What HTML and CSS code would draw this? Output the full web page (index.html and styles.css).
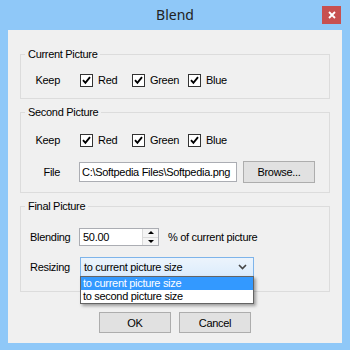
FILE: index.html
```html
<!DOCTYPE html>
<html>
<head>
<meta charset="utf-8">
<link rel="stylesheet" href="styles.css">
</head>
<body>
<div class="window">
  <div class="titlebar">
    <span></span>
    <span class="title">Blend</span>
    <span class="close"><svg width="8" height="8" viewBox="0 0 8 8"><path d="M1 1 L7 7 M7 1 L1 7" stroke="#fff" stroke-width="1.8" fill="none"/></svg></span>
  </div>
  <div class="client">
    <fieldset class="group g1">
      <legend>Current Picture</legend>
      <div class="row">
        <span class="lbl">Keep</span>
        <div class="checks">
          <label class="check"><span class="box"><svg width="11" height="11" viewBox="0 0 11 11"><path d="M2 5.2 L4.4 7.8 L9 2.2" stroke="#000" stroke-width="1.9" fill="none"/></svg></span>Red</label>
          <label class="check"><span class="box"><svg width="11" height="11" viewBox="0 0 11 11"><path d="M2 5.2 L4.4 7.8 L9 2.2" stroke="#000" stroke-width="1.9" fill="none"/></svg></span>Green</label>
          <label class="check"><span class="box"><svg width="11" height="11" viewBox="0 0 11 11"><path d="M2 5.2 L4.4 7.8 L9 2.2" stroke="#000" stroke-width="1.9" fill="none"/></svg></span>Blue</label>
        </div>
      </div>
    </fieldset>
    <fieldset class="group g2">
      <legend>Second Picture</legend>
      <div class="row">
        <span class="lbl">Keep</span>
        <div class="checks">
          <label class="check"><span class="box"><svg width="11" height="11" viewBox="0 0 11 11"><path d="M2 5.2 L4.4 7.8 L9 2.2" stroke="#000" stroke-width="1.9" fill="none"/></svg></span>Red</label>
          <label class="check"><span class="box"><svg width="11" height="11" viewBox="0 0 11 11"><path d="M2 5.2 L4.4 7.8 L9 2.2" stroke="#000" stroke-width="1.9" fill="none"/></svg></span>Green</label>
          <label class="check"><span class="box"><svg width="11" height="11" viewBox="0 0 11 11"><path d="M2 5.2 L4.4 7.8 L9 2.2" stroke="#000" stroke-width="1.9" fill="none"/></svg></span>Blue</label>
        </div>
      </div>
      <div class="row row-file">
        <span class="lbl">File</span>
        <span class="textbox">C:\Softpedia Files\Softpedia.png</span>
        <span class="btn browse">Browse...</span>
      </div>
    </fieldset>
    <fieldset class="group g3">
      <legend>Final Picture</legend>
      <div class="row">
        <span class="lbl">Blending</span>
        <span class="spinbox">
          <span class="spin-text">50.00</span>
          <span class="spin">
            <span class="spin-btn"><span class="tri-up"></span></span>
            <span class="spin-btn"><span class="tri-down"></span></span>
          </span>
        </span>
        <span class="pct">% of current picture</span>
      </div>
      <div class="row">
        <span class="lbl">Resizing</span>
        <span class="combo">
          <span class="combo-text">to current picture size</span>
          <svg class="chev" width="9" height="6" viewBox="0 0 9 6"><path d="M1 1 L4.5 4.5 L8 1" stroke="#444" stroke-width="1.6" fill="none"/></svg>
          <span class="droplist">
            <span class="item sel">to current picture size</span>
            <span class="item">to second picture size</span>
          </span>
        </span>
      </div>
    </fieldset>
    <div class="buttons">
      <span class="btn">OK</span>
      <span class="btn">Cancel</span>
    </div>
  </div>
</div>
</body>
</html>
```
FILE: styles.css
```css
html, body { margin: 0; padding: 0; }
body {
  width: 350px; height: 350px;
  font-family: "Liberation Sans", Arial, sans-serif;
  font-size: 11px;
  letter-spacing: -0.3px;
  color: #000;
}
.window {
  width: 350px; height: 350px;
  box-sizing: border-box;
  background: #8fc8f8;
  padding: 0 8px 7px;
  display: flex; flex-direction: column;
}
.titlebar {
  height: 30px;
  display: grid;
  grid-template-columns: 1fr auto 1fr;
  align-items: start;
}
.title {
  font-family: "Noto Sans", "Open Sans", sans-serif;
  font-size: 14px;
  letter-spacing: 0;
  line-height: 30px;
  color: #222;
}
.close {
  justify-self: end;
  margin-top: 6px;
  margin-right: 1px;
  width: 19px; height: 18px;
  background: #c75050;
  display: flex; align-items: center; justify-content: center;
}
.close svg { display: block; }
.client {
  flex: 1;
  background: #f0f0f0;
  padding: 18px 12px 0 12px;
}
.group {
  margin: 0;
  padding: 0;
  min-width: 0;
  border: 1px solid #dcdcdc;
}
.group legend {
  margin-left: 4px;
  padding: 0 3px;
  line-height: 13px;
}
.g1 { padding: 9px 0 8px 0; }
.g2 { margin-top: 7px; padding: 11px 0 9px 0; }
.g3 { margin-top: 7px; padding: 14px 0 14px 0; }
.row {
  display: flex;
  align-items: center;
  height: 20px;
}
.row-file { height: 22px; margin-top: 11px; }
.g3 .row + .row { margin-top: 10px; }
.lbl {
  width: 30px;
  margin-left: 9px;
  margin-right: 20px;
  text-align: right;
  white-space: nowrap;
}
.g3 .lbl { width: 49px; margin-right: 0; text-align: left; }
.row-file .lbl { margin-right: 19px; }
.checks {
  display: grid;
  grid-template-columns: 52px 56px auto;
}
.check {
  display: flex; align-items: center; gap: 5px;
}
.box {
  width: 13px; height: 13px;
  box-sizing: border-box;
  border: 1px solid #333;
  background: #fff;
  display: flex; align-items: center; justify-content: center;
}
.box svg { display: block; }
.textbox {
  width: 158px; height: 20px;
  box-sizing: border-box;
  border: 1px solid #abadb3;
  background: #fff;
  padding-left: 2px;
  display: flex; align-items: center;
  white-space: nowrap; overflow: hidden;
}
.btn {
  width: 72px; height: 21px;
  box-sizing: border-box;
  border: 1px solid #adadad;
  background: #e1e1e1;
  display: flex; align-items: center; justify-content: center;
}
.browse { margin-left: 6px; height: 22px; }
.spinbox {
  width: 80px; height: 18px;
  box-sizing: border-box;
  border: 1px solid #abadb3;
  background: #fff;
  display: flex;
}
.spin-text { flex: 1; padding-left: 3px; display: flex; align-items: center; }
.spin {
  width: 15px;
  display: flex; flex-direction: column;
  border-left: 1px solid #dadada;
}
.spin-btn {
  flex: 1;
  display: flex; align-items: center; justify-content: center;
  background: #f4f4f4;
}
.spin-btn + .spin-btn { border-top: 1px solid #dadada; }
.tri-up, .tri-down {
  width: 0; height: 0;
  border-left: 3px solid transparent;
  border-right: 3px solid transparent;
}
.tri-up { border-bottom: 3px solid #000; }
.tri-down { border-top: 3px solid #000; }
.pct { margin-left: 9px; }
.combo {
  position: relative;
  margin-left: 1px;
  width: 174px; height: 20px;
  box-sizing: border-box;
  border: 1px solid #7eb4ea;
  background: linear-gradient(#ecf4fc, #dcecfc);
  display: flex; align-items: center;
  padding: 0 6px 0 3px;
}
.combo-text { flex: 1; }
.chev { display: block; }
.droplist {
  position: absolute;
  left: -1px; top: 18px;
  width: 174px;
  box-sizing: border-box;
  border: 1px solid #646464;
  background: #fff;
  box-shadow: 2px 2px 3px rgba(0,0,0,0.35);
  display: flex; flex-direction: column;
  z-index: 2;
}
.item {
  height: 13px; line-height: 13px;
  padding-left: 2px;
  white-space: nowrap;
}
.item.sel { background: #3399ff; color: #fff; }
.buttons {
  margin-top: 20px;
  display: flex; justify-content: center; gap: 8px;
}
```
